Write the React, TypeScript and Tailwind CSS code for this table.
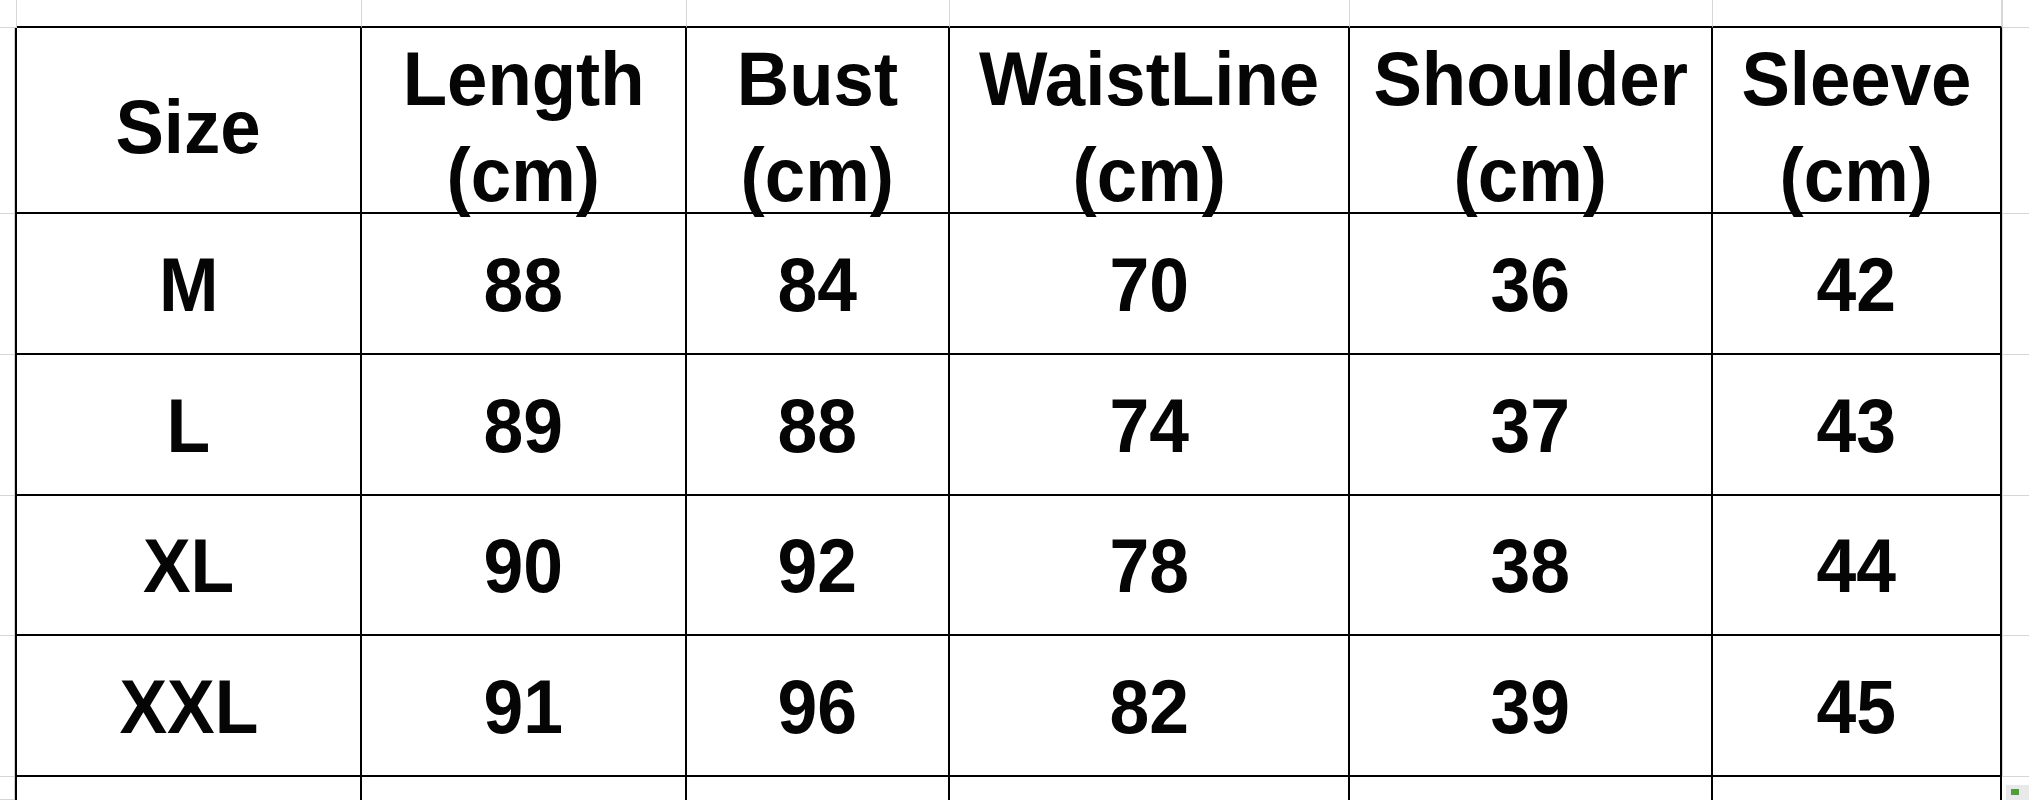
import React from "react";

const cols = ["17px", "345px", "325px", "263px", "400px", "363px", "289px", "27px"];
const rows = ["28px", "186px", "141px", "141px", "140px", "141px", "23px"];

const header: [string, string | null][] = [
  ["Size", null],
  ["Length", "(cm)"],
  ["Bust", "(cm)"],
  ["WaistLine", "(cm)"],
  ["Shoulder", "(cm)"],
  ["Sleeve", "(cm)"],
];

const data = [
  ["M", "88", "84", "70", "36", "42"],
  ["L", "89", "88", "74", "37", "43"],
  ["XL", "90", "92", "78", "38", "44"],
  ["XXL", "91", "96", "82", "39", "45"],
];

export default function App() {
  const cells: React.ReactNode[] = [];
  for (let r = 0; r < 7; r++) {
    for (let c = 0; c < 8; c++) {
      const key = `${r}-${c}`;
      const inTableCol = c >= 1 && c <= 6;
      const inTableRow = r >= 1 && r <= 5;
      if (r === 0) {
        if (c === 0) {
          cells.push(<div key={key} className="border-r border-b border-[#d6d6d6]" />);
        } else if (c === 7) {
          cells.push(<div key={key} className="border-l border-b border-[#d6d6d6]" />);
        } else {
          cells.push(<div key={key} className="border-r border-r-[#d6d6d6] border-b-2 border-b-black" />);
        }
        continue;
      }
      if (c === 0) {
        cells.push(
          <div key={key} className="flex">
            <div className="flex-1 border-b border-[#d6d6d6]" />
            <div className="w-px bg-[#cfcfcf]" />
            <div className="w-[2px] bg-black" />
          </div>
        );
        continue;
      }
      if (c === 7) {
        if (r === 6) {
          cells.push(
            <div key={key} className="flex flex-col pl-[4px] pt-[8px]">
              <div className="flex-1 bg-[#e9e9e9] flex items-start pl-[5px] pt-[4px]">
                <div className="w-[8px] h-[6px] bg-[#4f9d3f]" />
              </div>
            </div>
          );
        } else {
          cells.push(<div key={key} className="border-l border-b border-[#d6d6d6]" />);
        }
        continue;
      }
      if (r === 6) {
        cells.push(<div key={key} className="border-r-2 border-black" />);
        continue;
      }
      if (inTableCol && inTableRow) {
        const ci = c - 1;
        if (r === 1) {
          const [a, b] = header[ci];
          cells.push(
            <div
              key={key}
              className="border-r-2 border-b-2 border-black flex flex-col items-center justify-center pt-[14px] leading-[96px]"
            >
              <span className="block scale-x-[0.955] whitespace-nowrap">{a}</span>
              {b && <span className="block scale-x-[0.955] whitespace-nowrap">{b}</span>}
            </div>
          );
        } else {
          const v = data[r - 2][ci];
          cells.push(
            <div
              key={key}
              className="border-r-2 border-b-2 border-black flex items-center justify-center leading-none pt-[2px]"
            >
              <span className="block scale-x-[0.94] whitespace-nowrap">{v}</span>
            </div>
          );
        }
      }
    }
  }

  return (
    <div className="w-[2029px] h-[800px] overflow-hidden bg-white text-[#050505] font-['Liberation_Sans',Arial,sans-serif] font-bold text-[76px]">
      <div
        className="grid w-[2029px] h-[800px]"
        style={{ gridTemplateColumns: cols.join(" "), gridTemplateRows: rows.join(" ") }}
      >
        {cells}
      </div>
    </div>
  );
}
